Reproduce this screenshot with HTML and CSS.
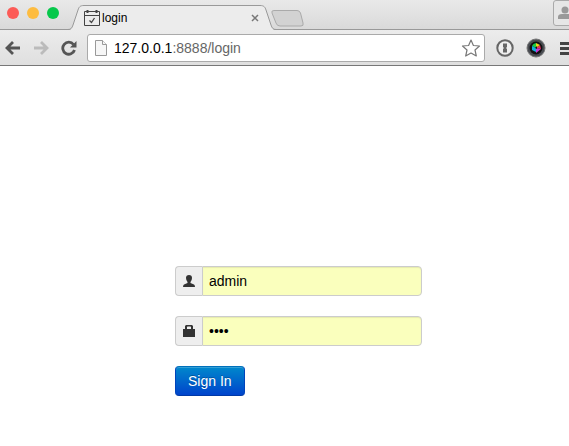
FILE: index.html
```html
<!DOCTYPE html>
<html lang="en">
<head>
<meta charset="utf-8">
<title>login</title>
<link rel="stylesheet" href="styles.css">
</head>
<body>
<header class="browser">
  <div class="tabstrip">
    <div class="lights">
      <button class="light red" aria-label="Close window"></button>
      <button class="light yellow" aria-label="Minimize window"></button>
      <button class="light green" aria-label="Zoom window"></button>
    </div>
    <div class="tab">
      <svg class="slope" width="16" height="25" viewBox="0 0 16 25"><path d="M0 25C3 25 4 23 5 20L10 5C11 2 12 .5 16 .5V25Z" fill="#ececec"/><path d="M0 24.5C3 24.5 4 23 5 20L10 5C11 2 12 .5 16 .5" fill="none" stroke="#999"/></svg>
      <div class="tab-body">
        <svg width="16" height="16" viewBox="0 0 16 16" fill="none" stroke="#444"><path d="M.5 1.500H15.500V15.500H.5ZM.5 5.500H15.500"/><path d="M3.500 0V3M12.500 0V3" stroke-width="2"/><path d="M5.500 10.500L7.500 12.500L10.500 8" stroke-width="1.300"/></svg>
        <span class="tab-title">login</span>
        <button class="icon-button" aria-label="Close tab"><svg width="8" height="8" viewBox="0 0 8 8" stroke="#777" stroke-width="1.500"><path d="M1 1L7 7M7 1L1 7"/></svg></button>
      </div>
      <svg class="slope" width="16" height="25" viewBox="0 0 16 25"><path d="M16 25C13 25 12 23 11 20L6 5C5 2 4 .5 0 .5V25Z" fill="#ececec"/><path d="M16 24.500C13 24.500 12 23 11 20L6 5C5 2 4 .5 0 .5" fill="none" stroke="#999"/></svg>
    </div>
    <button class="icon-button new-tab" aria-label="New tab"><svg width="34" height="17" viewBox="0 0 34 17"><path d="M3 .5H26Q28.500 .5 29.500 3L32 13Q33 16 30 16H9Q6 16 5 13L1 3Q0 .5 3 .5Z" fill="#d2d2d2" stroke="#aaa"/></svg></button>
    <button class="profile" aria-label="Profile"><svg width="14" height="14" viewBox="0 0 14 14" fill="#999"><circle cx="7" cy="4" r="3.500"/><path d="M0 13V11Q0 8 4 8H10Q14 8 14 11V13Z"/></svg></button>
  </div>
  <nav class="toolbar">
    <button class="icon-button" aria-label="Back"><svg width="16" height="14" viewBox="0 0 16 14" fill="none" stroke="#555" stroke-width="2.800"><path d="M15 7H2M8 1L2 7L8 13"/></svg></button>
    <button class="icon-button" aria-label="Forward"><svg width="16" height="14" viewBox="0 0 16 14" fill="none" stroke="#bbb" stroke-width="2.800"><path d="M1 7H14M8 1L14 7L8 13"/></svg></button>
    <button class="icon-button" aria-label="Reload"><svg width="16" height="16" viewBox="0 0 16 16"><path d="M12.500 4.500A6 6 0 1 0 13.500 10" fill="none" stroke="#555" stroke-width="2.800"/><path d="M15.500 1V7.500H9Z" fill="#555"/></svg></button>
    <div class="address">
      <svg width="12" height="16" viewBox="0 0 12 16" fill="#f6f6f6" stroke="#999"><path d="M.5 .5H7.500L11.500 4.500V15.500H.5Z"/><path d="M7.500 .5V4.500H11.500"/></svg>
      <span class="url"><b>127.0.0.1</b>:8888/login</span>
      <button class="icon-button" aria-label="Bookmark"><svg width="20" height="18" viewBox="0 0 20 18"><path d="M10 1L12.400 6.500L18.500 7L14 11L15.300 17L10 14L4.700 17L6 11L1.500 7L7.600 6.500Z" fill="#fff" stroke="#777" stroke-width="1.200" stroke-linejoin="round"/></svg></button>
    </div>
    <button class="icon-button" aria-label="Password manager"><svg width="18" height="18" viewBox="0 0 18 18"><circle cx="9" cy="9" r="7.700" fill="#eee" stroke="#666" stroke-width="2"/><path d="M7 4.500H11V8L10 9L11 10V13.500H7V10L8 9L7 8Z" fill="#666"/></svg></button>
    <button class="icon-button" aria-label="Color picker"><svg width="20" height="20" viewBox="0 0 20 20"><circle cx="10" cy="10" r="9" fill="#494c52" stroke="#777"/><circle cx="10" cy="10" r="6.500" fill="#111"/><path d="M10 10L6 8A5 5 0 0 1 10 5Z" fill="#19cc42"/><path d="M10 10V5L14 7Z" fill="#e9d420"/><path d="M10 10L14 7L15 11Z" fill="#ed315b"/><path d="M10 10L15 11L10 15Z" fill="#c63bd3"/><path d="M10 10V14L6 12V8Z" fill="#10aee0"/><path d="M9 10L11 8L11 11Z" fill="#111"/></svg></button>
    <button class="icon-button menu" aria-label="Menu"><svg width="16" height="14" viewBox="0 0 16 14" fill="#444"><path d="M0 1H16V4H0ZM0 6H16V9H0ZM0 11H16V14H0Z"/></svg></button>
  </nav>
</header>
<main class="page">
  <form class="login">
    <div class="field">
      <label class="addon" for="user" aria-label="Username"><svg width="14" height="14" viewBox="0 0 14 14" fill="#333"><path d="M4 4Q4 1 7 1Q10 1 10 4Q10 6 8.500 8V9L12 10.500Q13 11 13 13H1Q1 11 2 10.500L5.500 9V8Q4 6 4 4Z"/></svg></label>
      <input id="user" type="text" value="admin">
    </div>
    <div class="field">
      <label class="addon" for="pass" aria-label="Password"><svg width="14" height="14" viewBox="0 0 14 14" fill="#333"><path fill-rule="evenodd" d="M1 5H3V2L4 1H10L11 2V5H13V13H1ZM5 5H9V3L8.500 2.500H5.500L5 3Z"/></svg></label>
      <input id="pass" type="password" value="pass">
    </div>
    <button class="submit" type="button">Sign In</button>
  </form>
</main>
</body>
</html>
```
FILE: styles.css
```css
* { box-sizing: border-box; }
body {
  margin: 0;
  background: #fff;
  font-family: "Liberation Sans", Arial, sans-serif;
  font-size: 14px;
}
svg { display: block; flex: none; }
button { flex: none; font-family: inherit; }
.icon-button { padding: 0; border: 0; background: none; }
.browser { overflow: hidden; }
.tabstrip {
  display: flex;
  align-items: flex-start;
  height: 30px;
  background: linear-gradient(#e9e9e9, #d9d9d9);
  box-shadow: inset 0 -1px #999;
}
.lights { display: flex; gap: 8px; padding: 7px 9px 0 7px; }
.light { width: 12px; height: 12px; padding: 0; border: 0; border-radius: 50%; }
.red { background: #fc5b57; }
.yellow { background: #fdbc40; }
.green { background: #06c84b; }
.tab { display: flex; flex: 0 1 208px; margin-top: 5px; }
.tab-body {
  display: flex;
  flex: 1;
  align-items: center;
  height: 25px;
  padding-right: 1px;
  border-top: 1px solid #999;
  background: #ececec;
}
.tab-title { flex: 1; padding-left: 2px; font-size: 12px; }
.new-tab { margin: 10px auto 0 -5px; }
.profile {
  width: 32px;
  height: 26px;
  margin-right: -16px;
  padding: 0 4px;
  border: 1px solid #aaa;
  border-radius: 3px;
  background: #e6e6e6;
}
.toolbar {
  display: flex;
  align-items: center;
  gap: 12px;
  height: 36px;
  padding-left: 5px;
  margin-right: -7px;
  border-bottom: 1px solid #777;
  background: linear-gradient(#ececec, #dfdfdf);
}
.address {
  display: flex;
  flex: 1;
  align-items: center;
  height: 28px;
  margin: 0 -1px 0 -2px;
  padding: 0 3px 0 7px;
  border: 1px solid #aaa;
  border-radius: 3px;
  background: #fff;
}
.menu { margin-left: 2px; }
.url { flex: 1; padding-left: 7px; color: #666; font-size: 14px; }
.url b { color: #000; font-weight: normal; }
.page { padding: 200px 0 50px; }
.login {
  display: flex;
  flex-direction: column;
  align-items: flex-start;
  gap: 20px;
  width: 247px;
  margin: 0 147px 0 auto;
}
.field { display: flex; width: 100%; height: 30px; }
.addon {
  display: grid;
  place-items: center;
  width: 27px;
  border: 1px solid #ccc;
  border-right: 0;
  border-radius: 4px 0 0 4px;
  background: #eee;
}
.field input {
  flex: 1;
  min-width: 0;
  padding: 4px 6px;
  border: 1px solid #ccc;
  border-radius: 0 4px 4px 0;
  background: #faffbd;
  box-shadow: inset 0 1px 1px rgba(0, 0, 0, .08);
  color: #000;
  font-family: inherit;
  font-size: 14px;
}
.submit {
  height: 30px;
  padding: 0 12px;
  border: 1px solid #04b;
  border-color: #0070bb #04b #0039a6;
  border-radius: 4px;
  background: linear-gradient(#08c, #04c);
  box-shadow: inset 0 1px rgba(255, 255, 255, .2);
  color: #fff;
  font-size: 14px;
  text-shadow: 0 -1px rgba(0, 0, 0, .25);
}
```
